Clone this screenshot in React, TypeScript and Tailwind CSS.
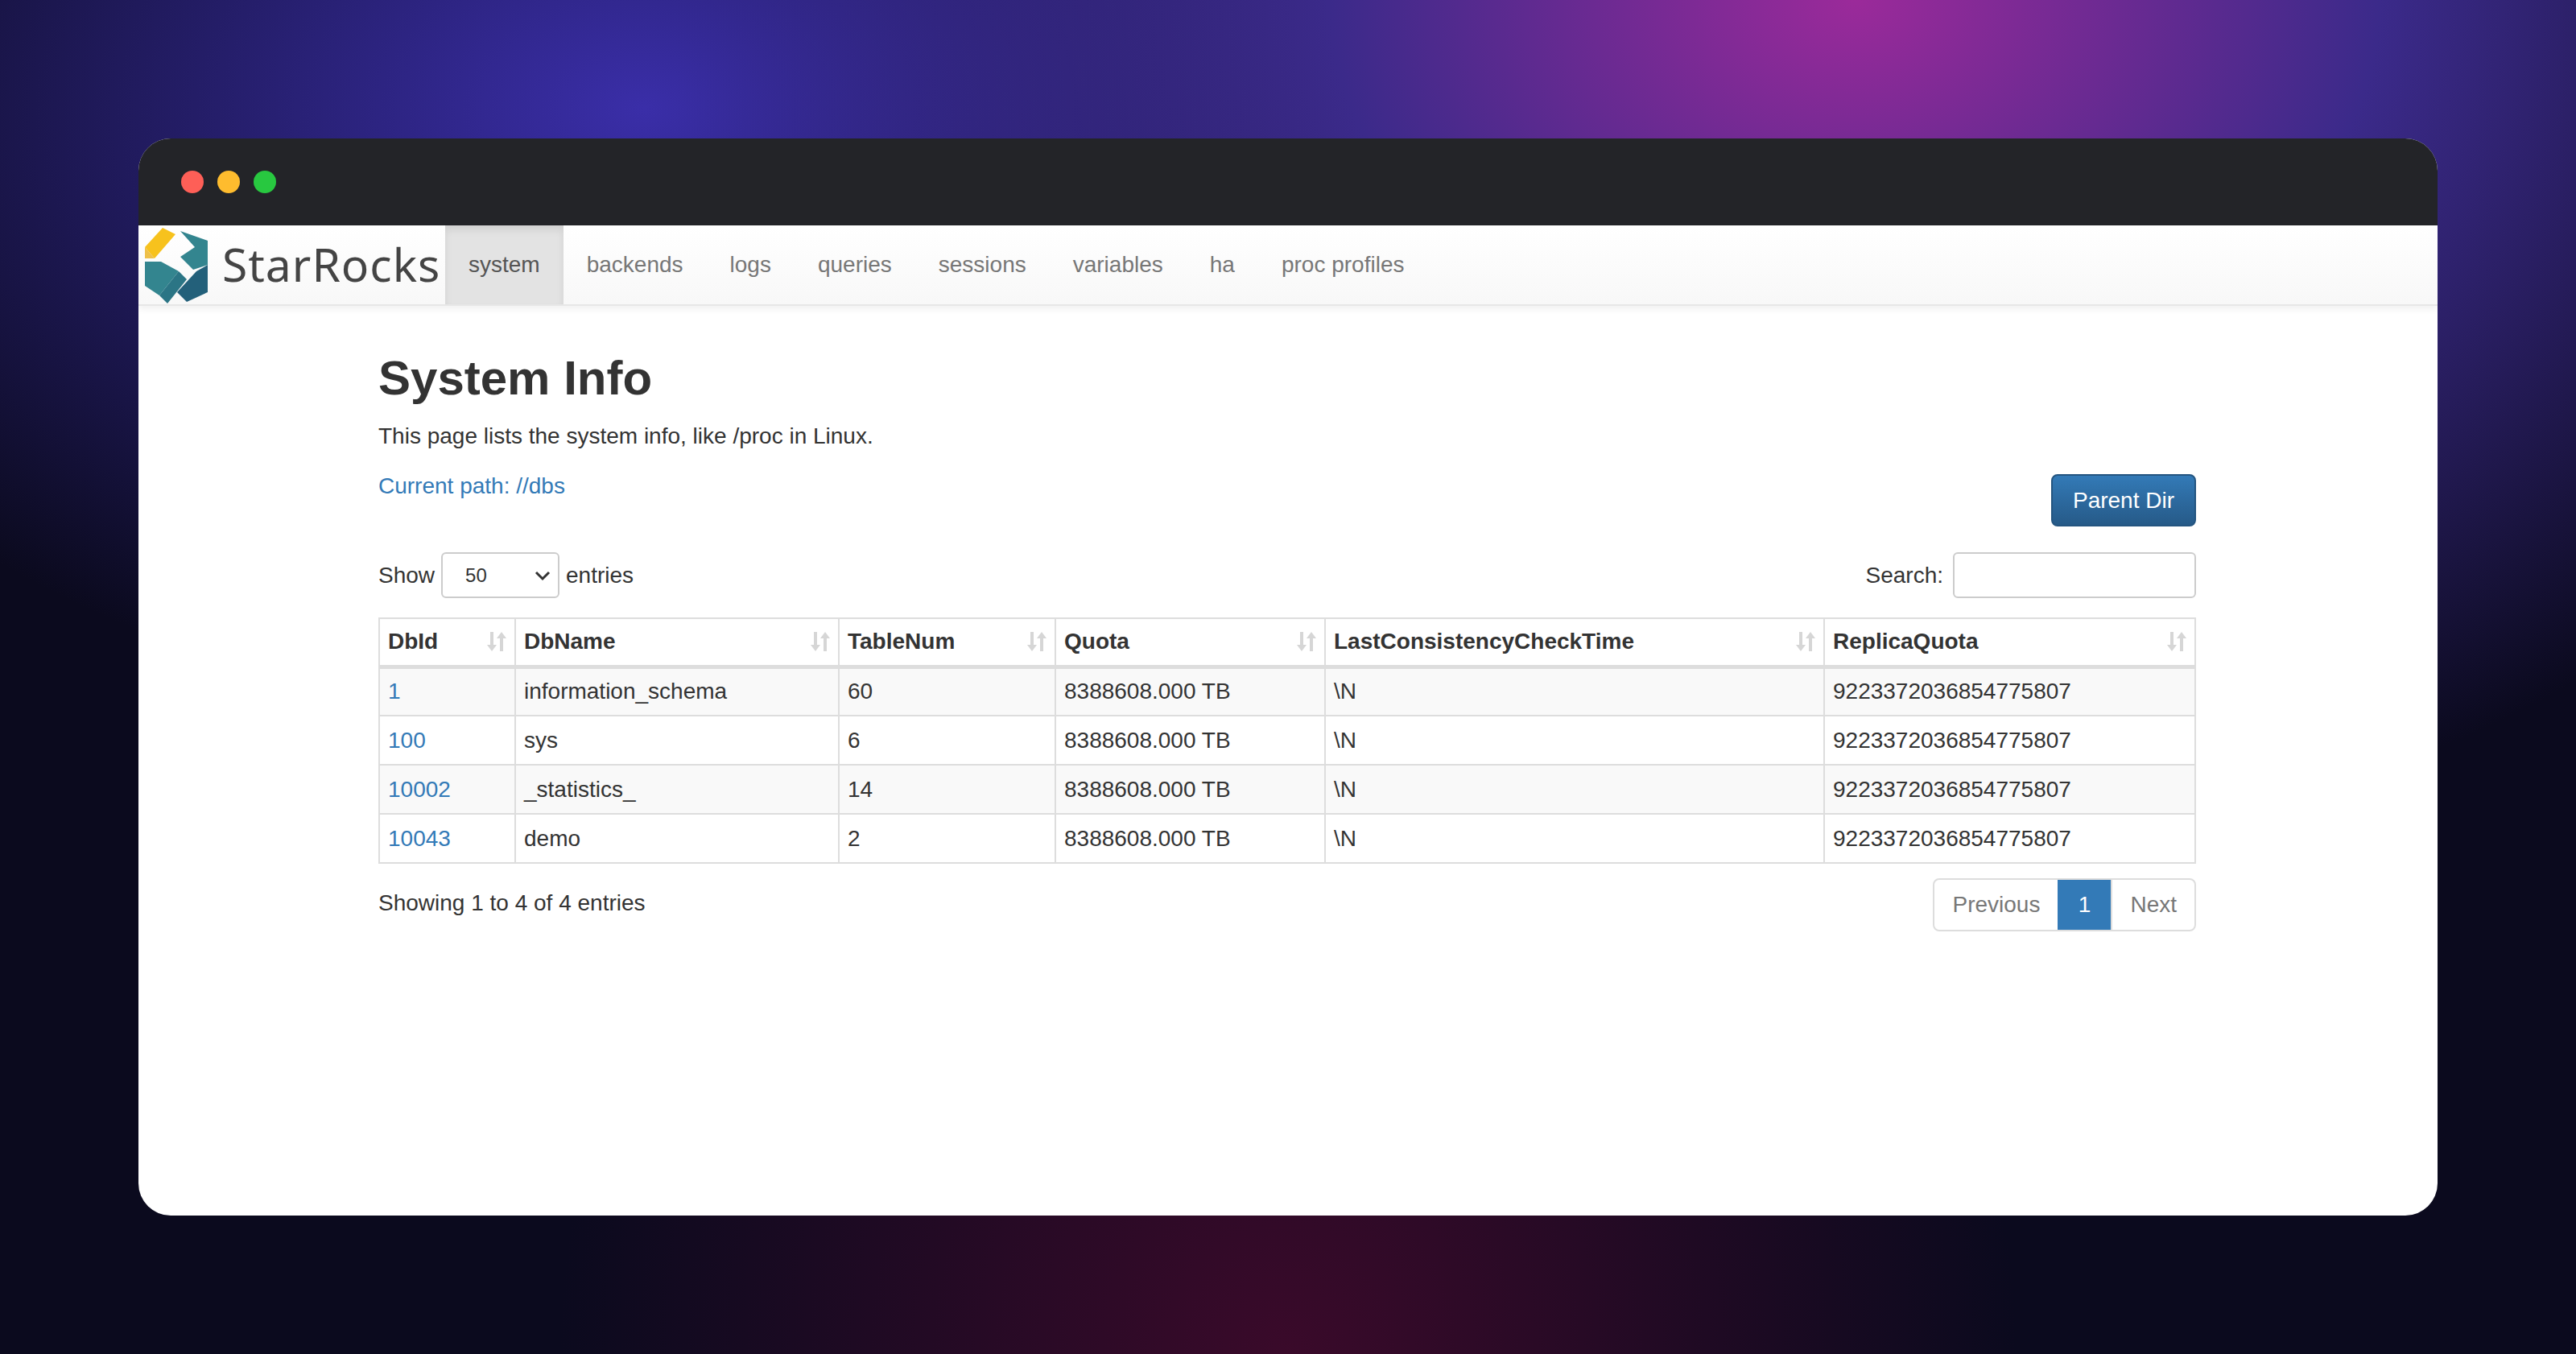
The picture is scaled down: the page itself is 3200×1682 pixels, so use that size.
import React from "react";

const cols = [
  { name: "DbId", w: "w-[169px]" },
  { name: "DbName", w: "w-[402px]" },
  { name: "TableNum", w: "w-[269px]" },
  { name: "Quota", w: "w-[335px]" },
  { name: "LastConsistencyCheckTime", w: "w-[620px]" },
  { name: "ReplicaQuota", w: "" },
];

const rows = [
  ["1", "information_schema", "60"],
  ["100", "sys", "6"],
  ["10002", "_statistics_", "14"],
  ["10043", "demo", "2"],
];

const tabs = ["system", "backends", "logs", "queries", "sessions", "variables", "ha", "proc profiles"];

const SortIcon = () => (
  <svg width="26" height="30" viewBox="0 0 26 30" className="shrink-0">
    <path d="M8 3v20" stroke="#d6d6d6" strokeWidth="4" />
    <path d="M2 19l6 8 6-8z" fill="#d6d6d6" />
    <path d="M20 27V7" stroke="#d6d6d6" strokeWidth="4" />
    <path d="M14 11l6-8 6 8z" fill="#d6d6d6" />
  </svg>
);

const Logo = () => (
  <svg width="92" height="100" viewBox="0 0 92 100">
    <path d="M26 4L4 28l12 14 26-30z" fill="#f7c21d" />
    <path d="M4 28v14l12 0z" fill="#eec04a" />
    <path d="M48 8l34 12v30L64 56 48 40l18-12z" fill="#33858f" />
    <path d="M82 50v34L56 96 44 84l24-26z" fill="#23607a" />
    <path d="M4 46l20 0 22 12-24 30-18-12z" fill="#33858f" />
    <path d="M22 88l24-30 10 10-24 30z" fill="#2b7585" />
  </svg>
);

export default function App() {
  return (
    <div
      className="w-[3200px] h-[1682px] pt-[172px] px-[172px] bg-[#0b0a1e] bg-[radial-gradient(ellipse_at_72%_0%,#9b2a9a_0%,#3b2a8a_20%,transparent_45%),radial-gradient(ellipse_at_25%_8%,#3a2ea8_0%,transparent_35%),radial-gradient(ellipse_at_50%_100%,#3a0a2a_0%,transparent_40%)]"
      style={{ fontFamily: '"Liberation Sans", Arial, sans-serif' }}
    >
      <div className="w-[2856px] h-[1338px] rounded-[40px] overflow-hidden bg-white flex flex-col">
        <div className="h-[108px] bg-[#232428] flex items-center gap-[17px] pl-[53px]">
          <span className="w-[28px] h-[28px] rounded-full bg-[#fe5f57]" />
          <span className="w-[28px] h-[28px] rounded-full bg-[#febc2e]" />
          <span className="w-[28px] h-[28px] rounded-full bg-[#28c840]" />
        </div>
        <div className="h-[100px] flex items-stretch bg-gradient-to-b from-white to-[#f8f8f8] border-b-2 border-[#e7e7e7] shadow-[0_4px_8px_rgba(0,0,0,0.06)]">
          <div className="flex items-center pl-[4px] w-[381px]">
            <Logo />
            <span className="text-[57px] text-[#444] ml-[8px] tracking-[1px]" style={{ fontFamily: '"Noto Sans", sans-serif' }}>StarRocks</span>
          </div>
          {tabs.map((t, i) => (
            <div
              key={t}
              className={`flex items-center px-[29px] text-[28px] ${i === 0 ? "bg-[#e3e3e3] text-[#555] shadow-[inset_0_6px_10px_rgba(0,0,0,0.08)]" : "text-[#777]"}`}
            >
              {t}
            </div>
          ))}
        </div>
        <div className="pl-[298px] pr-[300px] pt-[52px] text-[28px] text-[#333]">
          <h1 className="text-[60px] font-semibold leading-tight">System Info</h1>
          <p className="mt-[14px]">This page lists the system info, like /proc in Linux.</p>
          <div className="flex items-start justify-between">
            <p className="mt-[20px] text-[#337ab7]">Current path: //dbs</p>
            <button className="mt-[26px] h-[65px] px-[25px] rounded-[8px] bg-gradient-to-b from-[#337ab7] to-[#265a88] border-2 border-[#245580] text-white text-[28px]">
              Parent Dir
            </button>
          </div>
          <div className="flex items-center justify-between mt-[32px]">
            <div className="flex items-center gap-[8px]">
              <span>Show</span>
              <div className="w-[147px] h-[57px] border-2 border-[#ccc] rounded-[6px] flex items-center justify-between px-[28px] pr-[8px] text-[24px]">
                <span>50</span>
                <svg width="22" height="14" viewBox="0 0 22 14"><path d="M3 3l8 8 8-8" fill="none" stroke="#333" strokeWidth="3" /></svg>
              </div>
              <span>entries</span>
            </div>
            <div className="flex items-center gap-[12px]">
              <span>Search:</span>
              <div className="w-[302px] h-[57px] border-2 border-[#ccc] rounded-[6px]" />
            </div>
          </div>
          <table className="w-full mt-[24px] border-collapse border-2 border-[#ddd]">
            <thead>
              <tr className="h-[60px] border-b-[5px] border-[#ddd]">
                {cols.map((c) => (
                  <th key={c.name} className={`${c.w} border-2 border-[#ddd] px-[10px] text-left font-bold`}>
                    <div className="flex items-center justify-between">
                      <span>{c.name}</span>
                      <SortIcon />
                    </div>
                  </th>
                ))}
              </tr>
            </thead>
            <tbody>
              {rows.map((r, i) => (
                <tr key={r[0]} className={`h-[61px] ${i % 2 === 0 ? "bg-[#f9f9f9]" : "bg-white"}`}>
                  <td className="border-2 border-[#ddd] px-[10px] text-[#337ab7]">{r[0]}</td>
                  <td className="border-2 border-[#ddd] px-[10px]">{r[1]}</td>
                  <td className="border-2 border-[#ddd] px-[10px]">{r[2]}</td>
                  <td className="border-2 border-[#ddd] px-[10px]">8388608.000 TB</td>
                  <td className="border-2 border-[#ddd] px-[10px]">\N</td>
                  <td className="border-2 border-[#ddd] px-[10px]">9223372036854775807</td>
                </tr>
              ))}
            </tbody>
          </table>
          <div className="flex items-start justify-between mt-[18px]">
            <p className="mt-[10px]">Showing 1 to 4 of 4 entries</p>
            <div className="flex h-[66px] border-2 border-[#ddd] rounded-[8px] overflow-hidden text-[28px]">
              <span className="px-[22px] flex items-center text-[#777]">Previous</span>
              <span className="w-[66px] flex items-center justify-center bg-[#337ab7] text-white">1</span>
              <span className="px-[22px] flex items-center text-[#777] border-l-2 border-[#ddd]">Next</span>
            </div>
          </div>
        </div>
      </div>
    </div>
  );
}
